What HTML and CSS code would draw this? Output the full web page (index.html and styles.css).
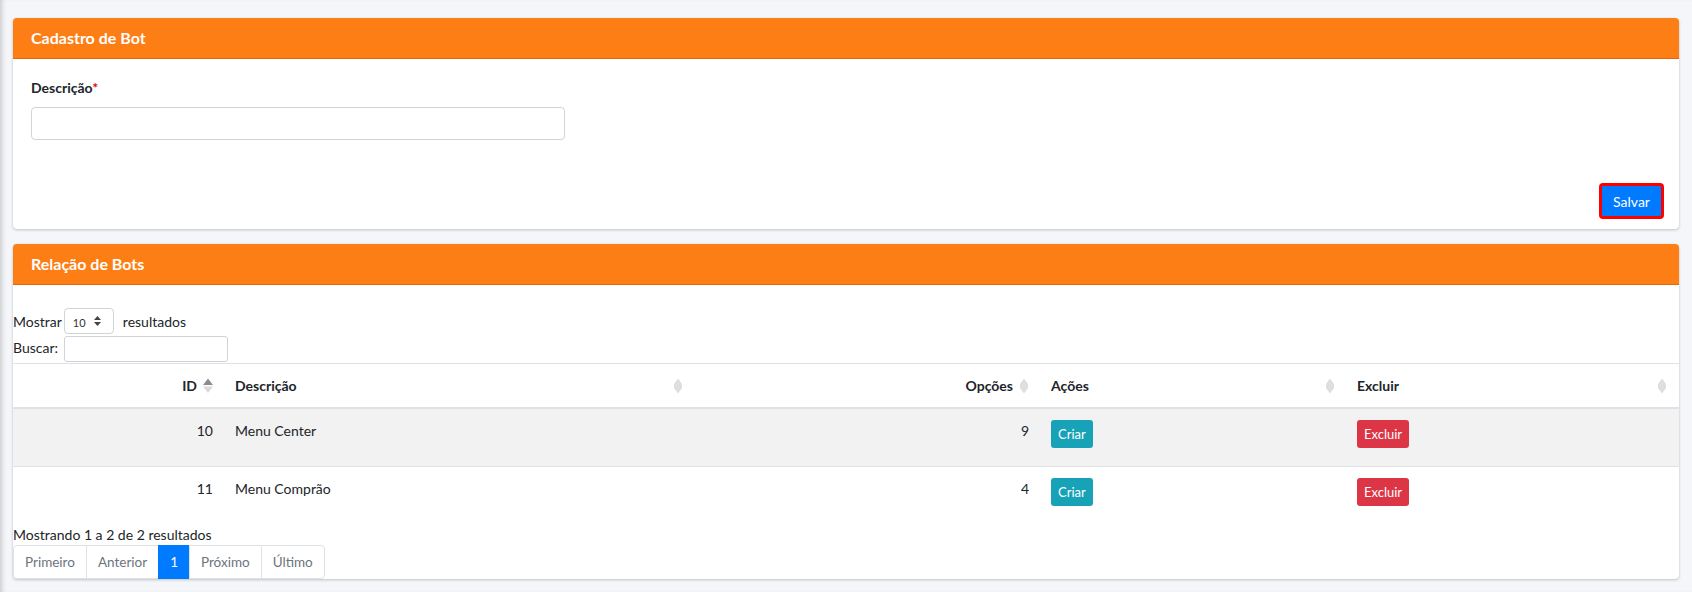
FILE: index.html
```html
<!DOCTYPE html>
<html lang="pt-BR">
<head>
  <meta charset="UTF-8" />
  <title>Cadastro de Bot</title>
  <link rel="stylesheet" href="styles.css">
</head>
<body>

  <div class="content">

    <!-- Cadastro -->
    <div class="card">
      <div class="card-header">
        <h3 class="card-title">Cadastro de Bot</h3>
      </div>
      <form class="card-body">
        <div class="form-group">
          <label for="descricao">Descrição<span class="req">*</span></label>
          <input type="text" id="descricao" class="form-control" />
        </div>
        <div class="form-actions">
          <button type="button" class="btn-save">Salvar</button>
        </div>
      </form>
    </div>

    <!-- Relação -->
    <div class="card">
      <div class="card-header">
        <h3 class="card-title">Relação de Bots</h3>
      </div>
      <div class="dt-wrapper">
        <div class="dt-length">
          Mostrar
          <span class="select-wrap">
            <select>
              <option>10</option>
              <option>25</option>
              <option>50</option>
            </select>
            <svg class="select-arrow" width="7" height="10" viewBox="0 0 7 10">
              <polygon points="3.5,0 7,4 0,4" fill="#444" />
              <polygon points="0,6 7,6 3.5,10" fill="#444" />
            </svg>
          </span>
          resultados
        </div>
        <div class="dt-filter">
          <label>Buscar: <input type="search" /></label>
        </div>

        <table class="dt-table">
          <colgroup>
            <col style="width: 212px">
            <col style="width: 470px">
            <col style="width: 346px">
            <col style="width: 306px">
            <col style="width: 332px">
          </colgroup>
          <thead>
            <tr>
              <th class="num">ID
                <svg class="sort" width="10" height="15" viewBox="0 0 10 15">
                  <polygon points="5,0 10,6.5 0,6.5" fill="#8c8c8c" />
                  <polygon points="0,8 10,8 5,14.5" fill="#dadada" />
                </svg>
              </th>
              <th>Descrição
                <svg class="sort" width="10" height="15" viewBox="0 0 10 15">
                  <polygon points="5,0 9,5.5 9,9.5 5,15 1,9.5 1,5.5" fill="#dedede" />
                </svg>
              </th>
              <th class="num">Opções
                <svg class="sort" width="10" height="15" viewBox="0 0 10 15">
                  <polygon points="5,0 9,5.5 9,9.5 5,15 1,9.5 1,5.5" fill="#dedede" />
                </svg>
              </th>
              <th>Ações
                <svg class="sort" width="10" height="15" viewBox="0 0 10 15">
                  <polygon points="5,0 9,5.5 9,9.5 5,15 1,9.5 1,5.5" fill="#dedede" />
                </svg>
              </th>
              <th>Excluir
                <svg class="sort" width="10" height="15" viewBox="0 0 10 15">
                  <polygon points="5,0 9,5.5 9,9.5 5,15 1,9.5 1,5.5" fill="#dedede" />
                </svg>
              </th>
            </tr>
          </thead>
          <tbody>
            <tr class="odd">
              <td class="num">10</td>
              <td>Menu Center</td>
              <td class="num">9</td>
              <td><button type="button" class="btn-sm btn-info">Criar</button></td>
              <td><button type="button" class="btn-sm btn-danger">Excluir</button></td>
            </tr>
            <tr>
              <td class="num">11</td>
              <td>Menu Comprão</td>
              <td class="num">4</td>
              <td><button type="button" class="btn-sm btn-info">Criar</button></td>
              <td><button type="button" class="btn-sm btn-danger">Excluir</button></td>
            </tr>
          </tbody>
        </table>

        <div class="dt-info">Mostrando 1 a 2 de 2 resultados</div>
        <ul class="pagination">
          <li><a href="#">Primeiro</a></li>
          <li><a href="#">Anterior</a></li>
          <li class="active"><a href="#">1</a></li>
          <li><a href="#">Próximo</a></li>
          <li><a href="#">Último</a></li>
        </ul>
      </div>
    </div>

  </div>

</body>
</html>
```

FILE: styles.css
```css
* { box-sizing: border-box; }

html, body {
  height: 100%;
  margin: 0;
}

body {
  font-family: 'Source Sans Pro', 'Lato', sans-serif;
  font-size: 14px;
  line-height: 1.5;
  color: #212529;
  background: #f4f6f9;
  box-shadow: inset 5px 0 5px -3px rgba(0, 0, 0, 0.18);
}

/* LAYOUT */
.content {
  padding: 18px 13px 0;
}

.card {
  background: #fff;
  border-radius: 4px;
  box-shadow: 0 0 1px rgba(0, 0, 0, 0.125), 0 1px 3px rgba(0, 0, 0, 0.2);
  margin-bottom: 15px;
  overflow: hidden;
}

.card-header {
  height: 41px;
  display: flex;
  align-items: center;
  padding: 0 18px;
  background: #fd7e14;
  border-bottom: 1px solid #e0670a;
}

.card-title {
  margin: 0;
  font-size: 16px;
  font-weight: 700;
  color: #fff;
}

/* FORM */
.card-body {
  padding: 18px 15px 10px 18px;
}

.form-group label {
  display: block;
  font-weight: 700;
  margin-bottom: 9px;
}

.req { color: #e3000f; }

.form-control {
  display: block;
  width: 534px;
  height: 33px;
  border: 1px solid #ced4da;
  border-radius: 4px;
  padding: 4px 10px;
  font: inherit;
}

.form-actions {
  display: flex;
  justify-content: flex-end;
  margin-top: 43px;
}

.btn-save {
  width: 65px;
  height: 36px;
  padding: 0;
  border: 3px solid #ff0000;
  border-radius: 4px;
  background: #007bff;
  color: #fff;
  font: inherit;
  font-size: 14px;
  cursor: pointer;
}

/* DATATABLE */
.dt-wrapper {
  padding-top: 23px;
}

.dt-length {
  display: flex;
  align-items: center;
  height: 26px;
}

.select-wrap {
  position: relative;
  display: inline-block;
  margin: 0 9px 0 2px;
}

.select-wrap select {
  appearance: none;
  -webkit-appearance: none;
  width: 50px;
  height: 26px;
  padding: 2px 0 0 8px;
  border: 1px solid #cfd4da;
  border-radius: 4px;
  background: #fff;
  font-family: inherit;
  font-size: 11px;
  color: #333;
}

.select-arrow {
  position: absolute;
  right: 13px;
  top: 8px;
}

.dt-filter {
  margin-top: 2px;
  height: 26px;
  display: flex;
  align-items: center;
}

.dt-filter input {
  width: 164px;
  height: 26px;
  margin-left: 2px;
  border: 1px solid #cfd4da;
  border-radius: 3px;
  vertical-align: middle;
}

.dt-table {
  width: 100%;
  table-layout: fixed;
  border-collapse: collapse;
  margin-top: 1px;
}

.dt-table th {
  position: relative;
  text-align: left;
  font-weight: 700;
  padding: 11px 28px 11px 10px;
  border-top: 1px solid #dee2e6;
  border-bottom: 2px solid #dee2e6;
}

.dt-table td {
  vertical-align: top;
  padding: 11px 12px 18px 10px;
  border-top: 1px solid #dee2e6;
}

.dt-table .num { text-align: right; }

.dt-table tr.odd td { background: #f2f2f2; }

.sort {
  position: absolute;
  right: 12px;
  top: 50%;
  transform: translateY(-50%);
}

.btn-sm {
  height: 28px;
  padding: 0 7px;
  border: none;
  border-radius: 3px;
  color: #fff;
  font-family: inherit;
  font-size: 13px;
  cursor: pointer;
}

.btn-info { background: #17a2b8; }
.btn-danger { background: #dc3545; }

.dt-info {
  line-height: 21px;
}

/* PAGINATION */
.pagination {
  display: flex;
  list-style: none;
  margin: 0;
  padding: 0;
}

.pagination li a {
  display: block;
  height: 34px;
  line-height: 32px;
  padding: 0 11px;
  border: 1px solid #dee2e6;
  margin-left: -1px;
  color: #6c757d;
  font-size: 13.5px;
  text-decoration: none;
}

.pagination li:first-child a {
  margin-left: 0;
  border-radius: 4px 0 0 4px;
}

.pagination li:last-child a {
  border-radius: 0 4px 4px 0;
}

.pagination li.active a {
  background: #007bff;
  border-color: #007bff;
  color: #fff;
}
```
